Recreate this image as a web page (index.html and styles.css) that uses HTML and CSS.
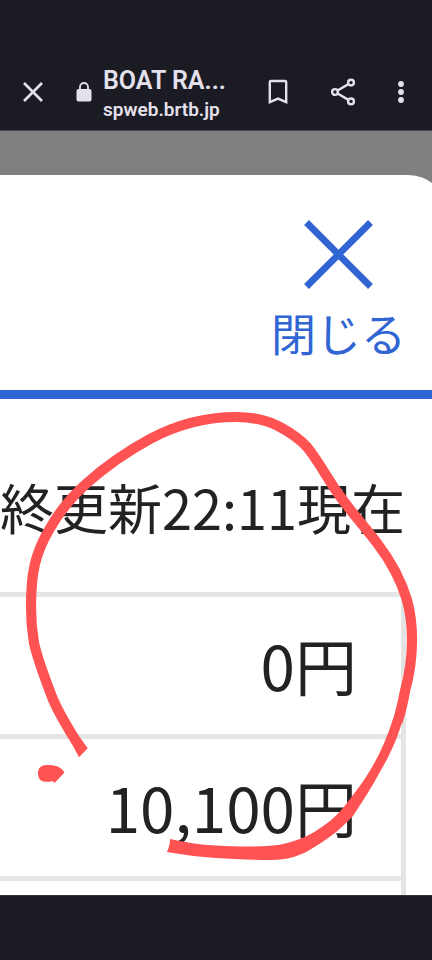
FILE: index.html
```
<!DOCTYPE html>
<html lang="ja">
<head>
<meta charset="UTF-8">
<meta name="viewport" content="width=device-width, initial-scale=1">
<title>BOAT RACE</title>
<link rel="stylesheet" href="styles.css">
</head>

<body>
<header class="browser-bar">
	<button class="bar-button" type="button" aria-label="Close tab">
		<svg width="24" height="24" viewBox="0 0 24 24" fill="none" stroke="currentColor" stroke-width="2.6"><path d="M3 3L21 21M21 3L3 21"/></svg>
	</button>
	<svg class="lock" width="16" height="20" viewBox="0 0 16 20"><path fill="none" stroke="currentColor" stroke-width="1.8" d="M4 8V5a4 4 0 0 1 8 0v3"/><rect x="0.5" y="7" width="15" height="12.5" rx="2" fill="currentColor"/></svg>
	<div class="site">
		<div class="site-title">BOAT RA...</div>
		<div class="site-host">spweb.brtb.jp</div>
	</div>
	<button class="bar-button" type="button" aria-label="Bookmark">
		<svg width="20" height="26" viewBox="0 0 20 26" fill="none" stroke="currentColor" stroke-width="2.4"><path d="M1.8 23.2V3.2Q1.8 2 3 2H17Q18.2 2 18.2 3.2V23.2L10 19.6Z"/></svg>
	</button>
	<button class="bar-button bar-button--share" type="button" aria-label="Share">
		<svg width="26" height="28" viewBox="0 0 26 28" fill="none" stroke="currentColor" stroke-width="2.4"><circle cx="5" cy="14" r="2.9"/><circle cx="21" cy="4.6" r="2.9"/><circle cx="21" cy="23.4" r="2.9"/><path d="M7.600 12.500L18.400 6.100M7.600 15.500L18.400 21.900"/></svg>
	</button>
	<button class="bar-button" type="button" aria-label="Menu">
		<svg width="6" height="24" viewBox="0 0 6 24" fill="currentColor"><circle cx="3" cy="4" r="2.9"/><circle cx="3" cy="12" r="2.9"/><circle cx="3" cy="20" r="2.9"/></svg>
	</button>
</header>

<main class="page">
	<div class="modal">
		<div class="modal-head">
			<button class="close" type="button">
				<svg width="70" height="70" viewBox="0 0 70 70" fill="none" stroke="currentColor" stroke-width="6.8"><path d="M3.5 3.5L67.500 67.500M67.500 3.5L3.5 67.500"/></svg>
				<span>閉じる</span>
			</button>
		</div>
		<p class="updated">終更新22:11現在</p>
		<table class="amounts">
			<tr><td>0円</td></tr>
			<tr><td>10,100円</td></tr>
			<tr><td></td></tr>
		</table>
	</div>
</main>

<footer class="nav-bar"></footer>

<!-- hand-drawn marker -->
<svg class="marker" width="432" height="960" viewBox="0 0 432 960" aria-hidden="true">
	<path fill="none" stroke="#ff5252" stroke-width="10.2" d="M76 741C66 725 58 712 52 697C46 681 38 661 34 643C32 631 31 620 31 607C31 573 35 554 49 530C59 512 71 497 87 483C105 467 126 452 150 439C178 424 206 417 236 417C254 417 267 420 280 427C291 433 299 438 307 447C317 459 326 476 337 492C350 511 364 526 377 543C390 560 401 580 407 600C411 614 412 627 412 640C412 657 410 673 405 691C403 702 401 711 397.500 722"/>
	<path fill="#ff5252" d="M403 719C397 739 391 753 381 770C372 787 362 802 353 816C340 830 328 839 316 846C301 856 289 860 269 860C248 860 232 859 216 858C199 857 184 855 167 852C169 847 170 844 170 839C185 842 200 845 216 845.500C240 847 263 847 278 845C305 840 316 831 326 824C337 816 345 806 353 795C370 774 384 748 393 719Z"/>
	<path fill="#ff5252" d="M87.700 748.300L79 757.300L71.500 743.300L80 737.500ZM38 773C38 768 41 765 47 765C55 765 60 766 64.500 772.500L54.500 783L52.500 781C45 783 38 782 38 773Z"/>
</svg>
</body>
</html>
```
FILE: styles.css
```
* {
	box-sizing: border-box;
}

body {
	margin: 0;
	min-height: 100vh;
	display: flex;
	flex-direction: column;
	position: relative;
	overflow: hidden;
	background: #1b1b24;
	font-family: "Noto Sans CJK JP", sans-serif;
	color: #222;
}

button {
	margin: 0;
	padding: 0;
	border: 0;
	background: none;
	color: inherit;
	font: inherit;
}

svg {
	display: block;
}

.browser-bar {
	display: flex;
	align-items: center;
	height: 131px;
	padding: 54px 28px 0 21px;
	border-bottom: 1px solid #4b4b56;
	color: #e4e1ec;
	font-family: Roboto, sans-serif;
}

.lock {
	margin: 0 11px 0 31px;
}

.site {
	flex: 1;
	padding-top: 6px;
	white-space: nowrap;
}

.site-title {
	font-size: 25px;
	line-height: 30px;
	font-weight: 600;
}

.site-host {
	font-size: 19px;
	line-height: 28px;
	font-weight: 600;
}

.bar-button--share {
	margin: 0 42px;
}

.page {
	flex: 1 0 0;
	min-height: 0;
	overflow: hidden;
	padding-top: 44px;
	background: #808080;
}

/* the sheet runs past the right edge of the zoomed viewport */
.modal {
	width: calc(100% + 16px);
	height: 100%;
	overflow: hidden;
	border-top-right-radius: 40px;
	background: #fff;
}

.modal-head {
	display: flex;
	justify-content: flex-end;
	height: 224px;
	padding: 44px 42px 0 0;
	border-bottom: 9px solid #3065d3;
}

.close {
	display: flex;
	flex-direction: column;
	align-items: center;
	align-self: flex-start;
	color: #3065d3;
	font-size: 45px;
	line-height: 60px;
}

.close span {
	margin-top: 14px;
}

.updated {
	display: flex;
	justify-content: flex-end;
	margin: 0;
	padding: 68px 43px 45px 0;
	font-size: 54px;
	line-height: 80px;
	white-space: nowrap;
}

.amounts {
	width: calc(100% - 42px);
	border-spacing: 0;
	border-right: 5px solid #e5e5e5;
}

.amounts td {
	height: 142px;
	padding: 0 44px 4px 0;
	border-top: 5px solid #e5e5e5;
	font-size: 62px;
	line-height: 80px;
	text-align: right;
}

.nav-bar {
	height: 65px;
	border-top: 1px solid #34343e;
}

.marker {
	position: absolute;
	top: 0;
	left: 0;
	pointer-events: none;
}
```
